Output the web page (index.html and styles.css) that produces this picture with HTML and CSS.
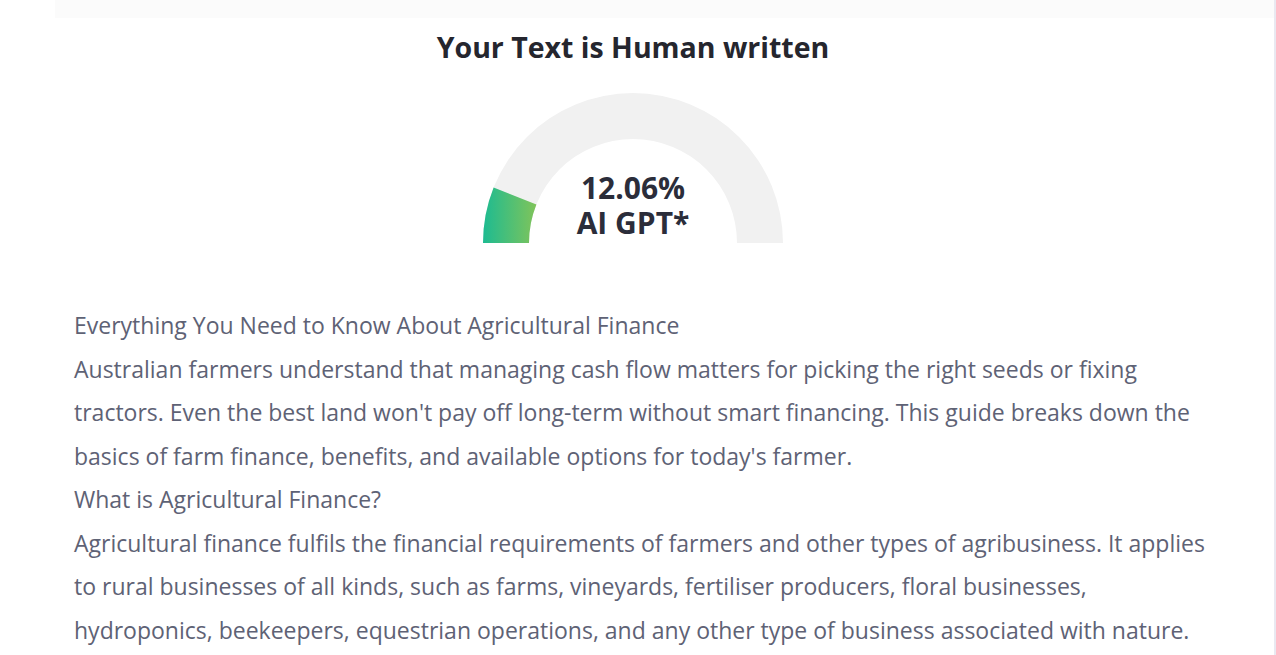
FILE: index.html
```html
<!DOCTYPE html>
<html>
<head>
<meta charset="utf-8">
<link rel="stylesheet" href="styles.css">
</head>
<body>
<div class="panel">
  <div class="topstrip"></div>
  <div class="inner">
    <h1 class="title">Your Text is Human written</h1>
    <div class="gauge">
      <svg class="gauge-svg" width="300" height="150" viewBox="0 0 300 150">
        <defs>
          <linearGradient id="g1" x1="0" y1="0" x2="1" y2="0">
            <stop offset="0" stop-color="#1dbb91"/>
            <stop offset="1" stop-color="#80c45a"/>
          </linearGradient>
        </defs>
        <path d="M 0 150 A 150 150 0 0 1 300 150 L 254 150 A 104 104 0 0 0 46 150 Z" fill="#f1f1f1"/>
        <path d="M 0 150 A 150 150 0 0 1 10.6 94.6 L 53.4 111.6 A 104 104 0 0 0 46 150 Z" fill="url(#g1)"/>
      </svg>
      <div class="gauge-label">12.06%<br>AI GPT*</div>
    </div>
    <div class="content">
      <p>Everything You Need to Know About Agricultural Finance</p>
      <p>Australian farmers understand that managing cash flow matters for picking the right seeds or fixing tractors. Even the best land won't pay off long-term without smart financing. This guide breaks down the basics of farm finance, benefits, and available options for today's farmer.</p>
      <p>What is Agricultural Finance?</p>
      <p>Agricultural finance fulfils the financial requirements of farmers and other types of agribusiness. It applies to rural businesses of all kinds, such as farms, vineyards, fertiliser producers, floral businesses, hydroponics, beekeepers, equestrian operations, and any other type of business associated with nature.</p>
    </div>
  </div>
</div>
</body>
</html>
```
FILE: styles.css
```css
html, body {
  margin: 0;
  padding: 0;
  background: #ffffff;
}
body {
  font-family: "Open Sans", "Noto Sans", sans-serif;
  overflow: hidden;
  height: 655px;
}
.panel {
  margin-left: 55px;
  border-right: 2px solid #e9e9f1;
  min-height: 655px;
  box-sizing: border-box;
}
.topstrip {
  height: 18px;
  background: #fbfbfb;
}
.inner {
  margin-right: 63px;
}
.title {
  margin: 10px 0 0 0;
  text-align: center;
  font-size: 28.5px;
  font-weight: 700;
  color: #25262e;
  line-height: 38px;
}
.gauge {
  width: 300px;
  height: 150px;
  margin: 27px auto 0;
  position: relative;
}
.gauge-svg {
  display: block;
}
.gauge-label {
  position: absolute;
  left: 0;
  right: 0;
  top: 77px;
  text-align: center;
  font-size: 30px;
  font-weight: 700;
  color: #2b2d3a;
  line-height: 35px;
}
.content {
  padding: 61px 0 0 19px;
  color: #5e6275;
  font-size: 23px;
  line-height: 43.5px;
}
.content p {
  margin: 0;
}
```
